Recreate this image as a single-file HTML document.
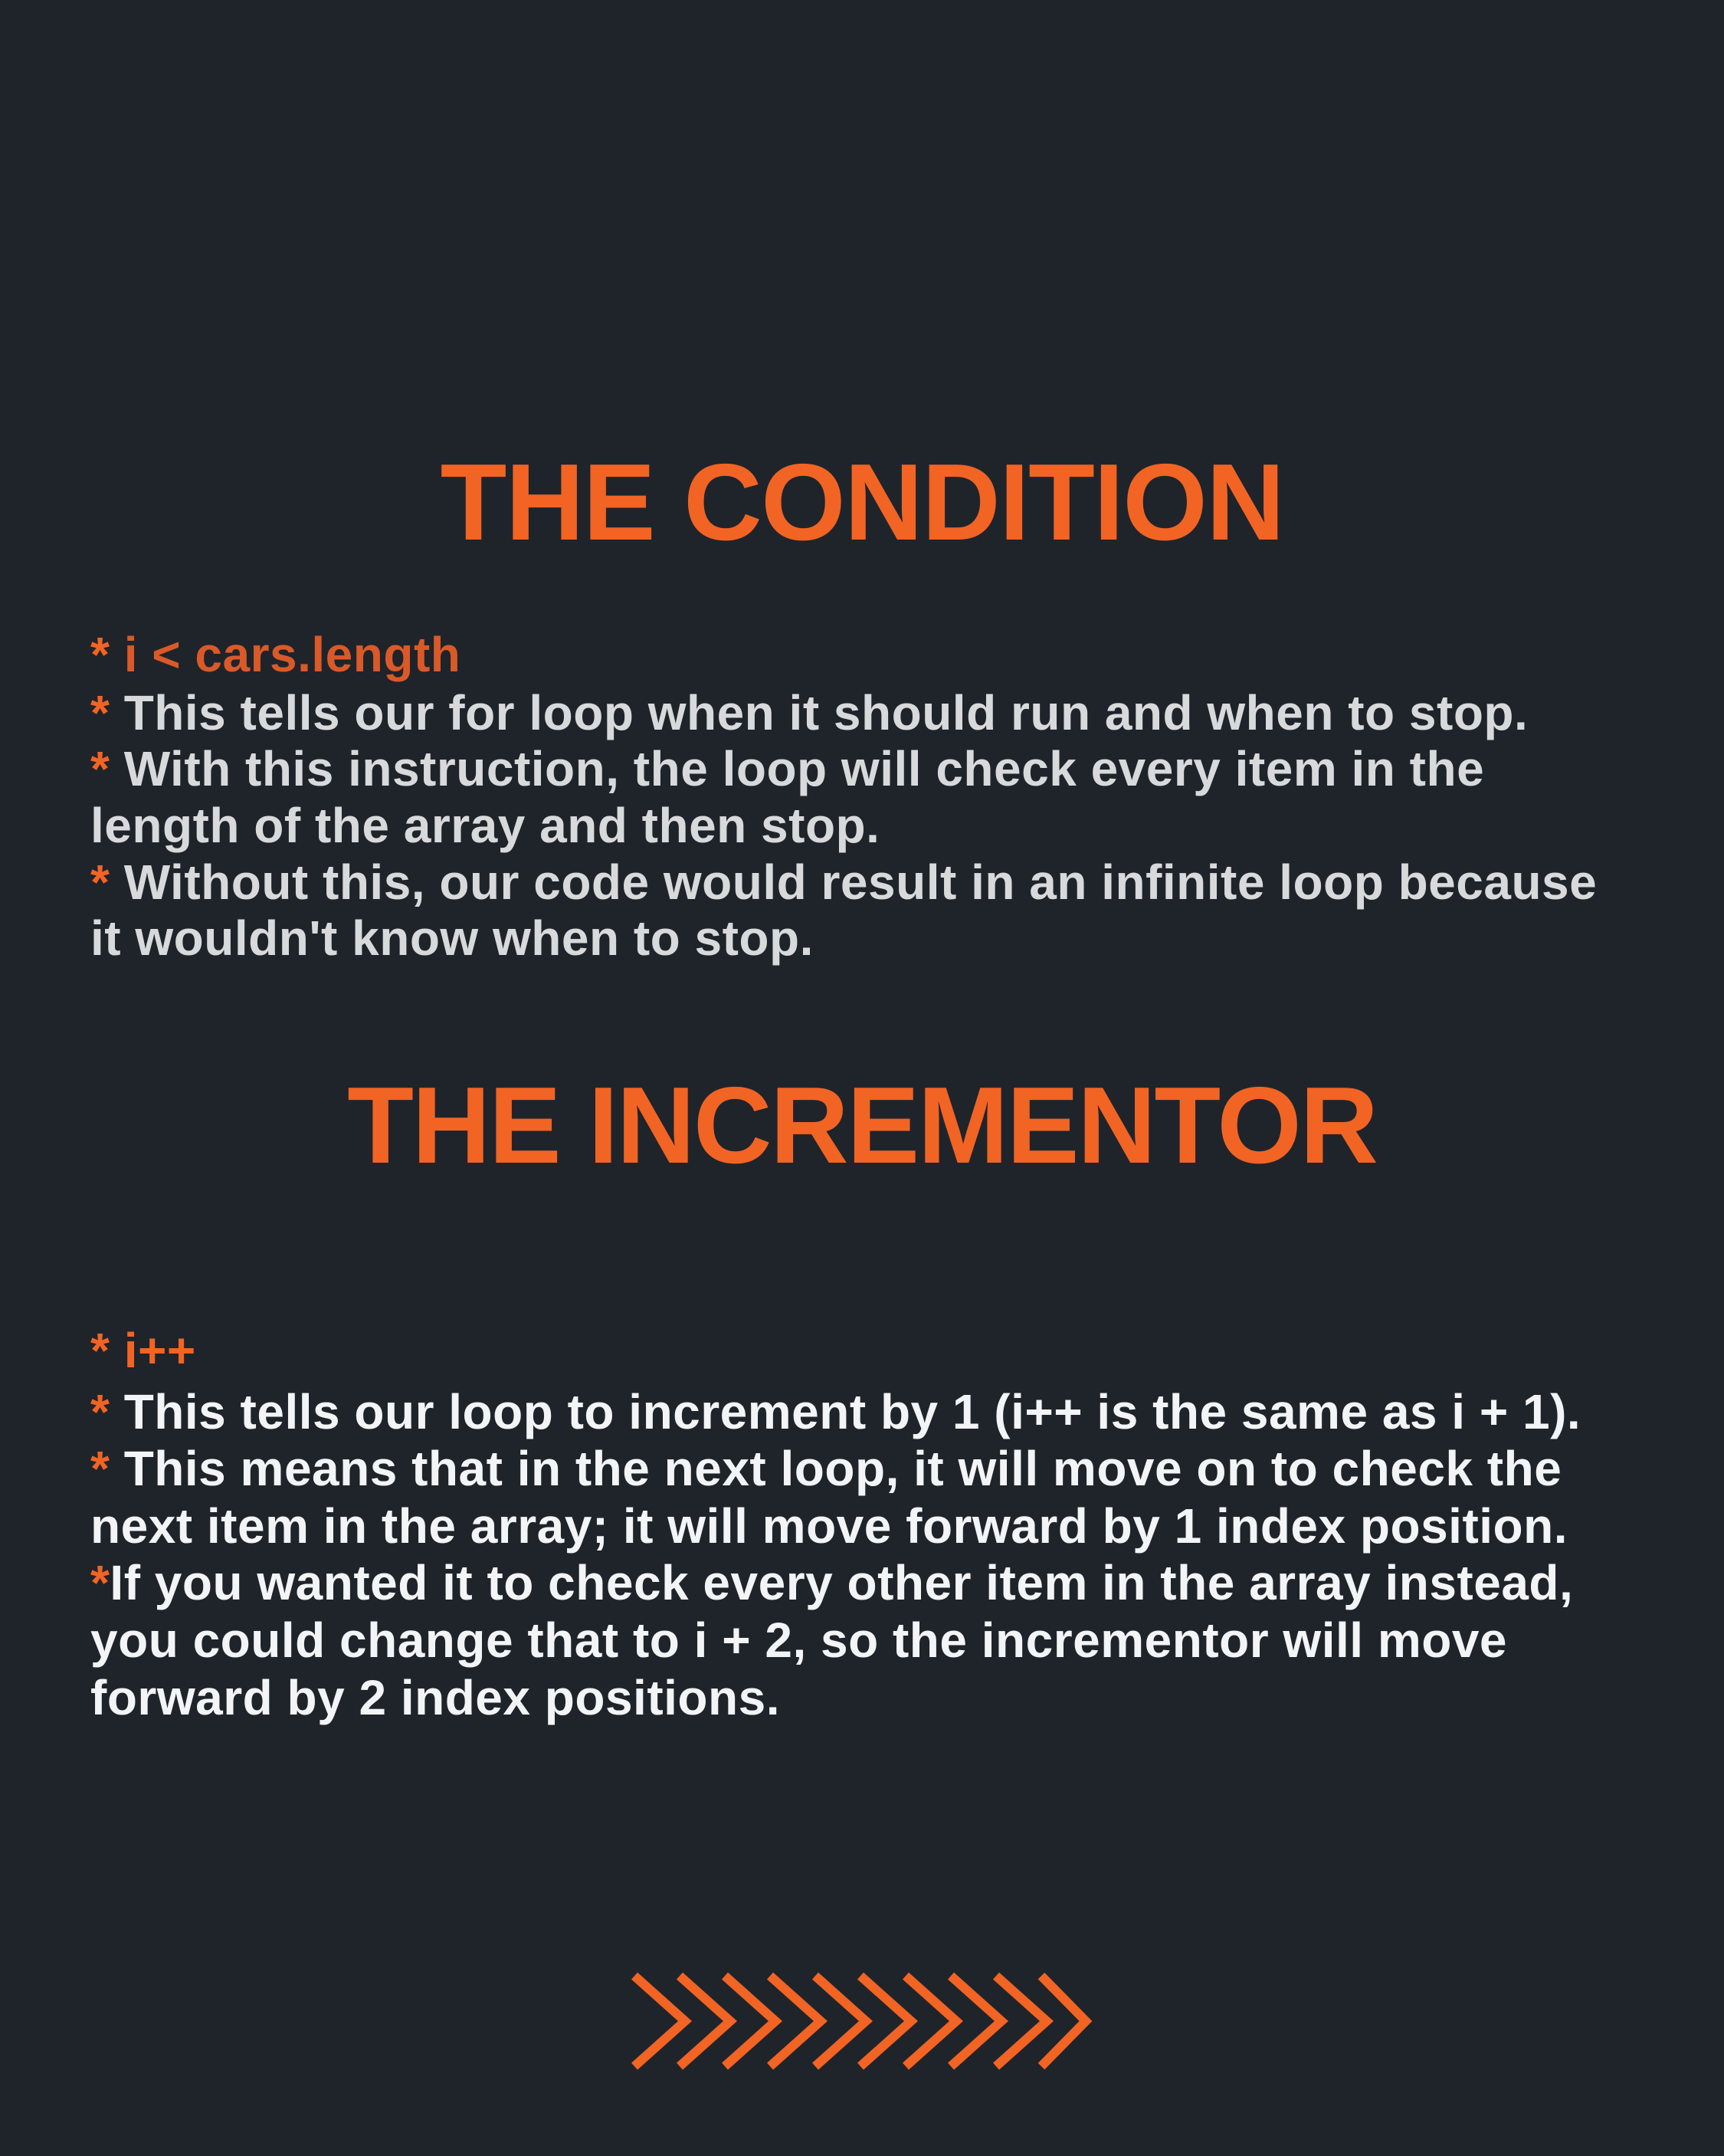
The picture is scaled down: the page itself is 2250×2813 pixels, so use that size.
<!DOCTYPE html>
<html><head><meta charset="utf-8"><style>
html,body{margin:0;padding:0;}
body{width:2250px;height:2813px;background:#1f242b;position:relative;overflow:hidden;font-family:"Liberation Sans",Arial,sans-serif;font-weight:bold;}
.h{position:absolute;left:0;width:2250px;text-align:center;color:#f26424;font-size:142px;line-height:142px;white-space:nowrap;}
.l{position:absolute;left:118px;font-size:64px;line-height:64px;letter-spacing:0.5px;white-space:nowrap;}
.g{color:#d8d9db}.w{color:#f3f4f6}.o{color:#f26424}.d{color:#d95a28}
</style></head><body>
<div class="h" style="top:585px;letter-spacing:-1.5px">THE CONDITION</div>
<div class="l d" style="top:822px"><span class="o">*</span> i &lt; cars.length</div>
<div class="l g" style="top:898px"><span class="o">*</span> This tells our for loop when it should run and when to stop.</div>
<div class="l g" style="top:971px"><span class="o">*</span> With this instruction, the loop will check every item in the</div>
<div class="l g" style="top:1045px">length of the array and then stop.</div>
<div class="l g" style="top:1119px"><span class="o">*</span> Without this, our code would result in an infinite loop because</div>
<div class="l g" style="top:1192px">it wouldn't know when to stop.</div>

<div class="h" style="top:1398px;letter-spacing:-2.3px">THE INCREMENTOR</div>
<div class="l o" style="top:1730px">* i++</div>
<div class="l w" style="top:1810px"><span class="o">*</span> This tells our loop to increment by 1 (i++ is the same as i + 1).</div>
<div class="l w" style="top:1884px"><span class="o">*</span> This means that in the next loop, it will move on to check the</div>
<div class="l w" style="top:1959px">next item in the array; it will move forward by 1 index position.</div>
<div class="l w" style="top:2033px"><span class="o">*</span>If you wanted it to check every other item in the array instead,</div>
<div class="l w" style="top:2108px">you could change that to i + 2, so the incrementor will move</div>
<div class="l w" style="top:2183px">forward by 2 index positions.</div>

<svg style="position:absolute;left:0;top:0" width="2250" height="2813">
<g fill="none" stroke="#f26424" stroke-width="12" stroke-linejoin="miter" stroke-miterlimit="10">
<polyline points="828,2578 894,2637 828,2696"/>
<polyline points="887,2578 953,2637 887,2696"/>
<polyline points="946,2578 1012,2637 946,2696"/>
<polyline points="1005,2578 1071,2637 1005,2696"/>
<polyline points="1064,2578 1130,2637 1064,2696"/>
<polyline points="1123,2578 1189,2637 1123,2696"/>
<polyline points="1182,2578 1248,2637 1182,2696"/>
<polyline points="1241,2578 1307,2637 1241,2696"/>
<polyline points="1300,2578 1366,2637 1300,2696"/>
<polyline points="1359,2578 1417,2637 1359,2696"/>
</g>
</svg>
</body></html>
